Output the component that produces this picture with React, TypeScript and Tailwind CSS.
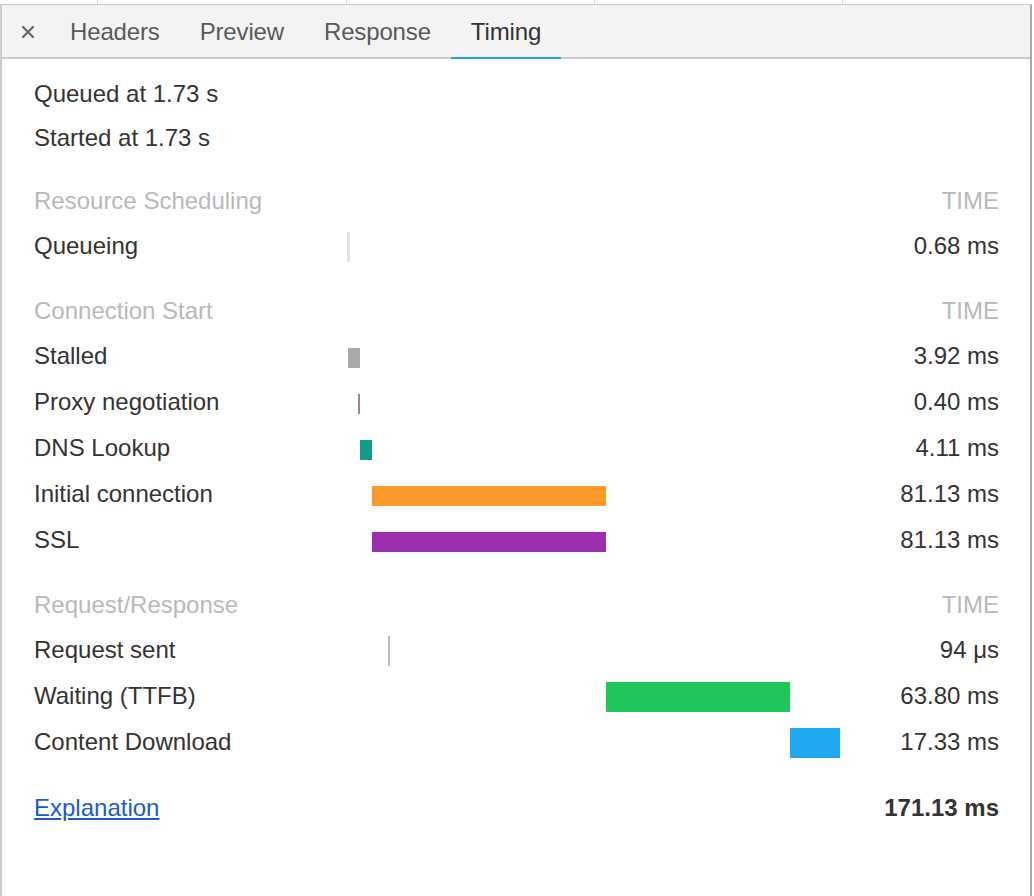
import React from 'react';

type Bar = { left: number; width: number; color: string; size: 'thin' | 'thick' };
type TimingRow = { label: string; time: string; bars: Bar[] };
type Section = { title: string; rows: TimingRow[] };

const sections: Section[] = [
  {
    title: 'Resource Scheduling',
    rows: [{ label: 'Queueing', time: '0.68 ms', bars: [{ left: 0, width: 3, color: 'bg-[#e2e2e2]', size: 'thick' }] }],
  },
  {
    title: 'Connection Start',
    rows: [
      { label: 'Stalled', time: '3.92 ms', bars: [{ left: 1, width: 12, color: 'bg-[#aaaaaa]', size: 'thin' }] },
      { label: 'Proxy negotiation', time: '0.40 ms', bars: [{ left: 11, width: 2, color: 'bg-[#a1887f]', size: 'thin' }] },
      { label: 'DNS Lookup', time: '4.11 ms', bars: [{ left: 13, width: 12, color: 'bg-[#159a8a]', size: 'thin' }] },
      { label: 'Initial connection', time: '81.13 ms', bars: [{ left: 25, width: 234, color: 'bg-[#fd982a]', size: 'thin' }] },
      { label: 'SSL', time: '81.13 ms', bars: [{ left: 25, width: 234, color: 'bg-[#9b2fae]', size: 'thin' }] },
    ],
  },
  {
    title: 'Request/Response',
    rows: [
      { label: 'Request sent', time: '94 μs', bars: [{ left: 41, width: 2, color: 'bg-[#b0bec5]', size: 'thick' }] },
      { label: 'Waiting (TTFB)', time: '63.80 ms', bars: [{ left: 259, width: 184, color: 'bg-[#1fc75b]', size: 'thick' }] },
      { label: 'Content Download', time: '17.33 ms', bars: [{ left: 443, width: 50, color: 'bg-[#1fa9f1]', size: 'thick' }] },
    ],
  },
];

const tabs = ['Headers', 'Preview', 'Response', 'Timing'];

const Row: React.FC<{ row: TimingRow }> = ({ row }) => (
  <div className="flex h-[46px] items-center pb-[2px] text-[#333]">
    <div className="w-[313px] shrink-0">{row.label}</div>
    <div className="relative h-full w-[494px] shrink-0">
      {row.bars.map((bar, i) => (
        <div
          key={i}
          className={`absolute ${bar.color} ${bar.size === 'thin' ? 'top-[14px] h-[20px]' : 'top-[8px] h-[30px]'}`}
          style={{ left: bar.left, width: bar.width }}
        />
      ))}
    </div>
    <div className="flex-1 text-right">{row.time}</div>
  </div>
);

export default function App() {
  return (
    <div className="relative h-[896px] w-[1034px] overflow-hidden bg-white font-['Liberation_Sans',Arial,sans-serif] text-[24px]">
      {/* strip of the request table above */}
      <div className="flex h-[5px] w-[1032px] border-b border-[#cccccc]">
        <div className="w-[98px] border-r border-[#d6d6d6]" />
        <div className="w-[249px] border-r border-[#d6d6d6]" />
        <div className="w-[248px] border-r border-[#d6d6d6]" />
        <div className="w-[248px] border-r border-[#d6d6d6]" />
        <div className="flex-1" />
      </div>

      <div className="flex h-[891px] w-[1032px] flex-col border-l-2 border-r-2 border-l-[#cccccc] border-r-[#a9a9a9]">
        {/* tab bar */}
        <div className="flex h-[54px] shrink-0 items-stretch border-b-2 border-[#cccccc] bg-[#f3f3f3] pb-[1px]">
          <div className="flex items-center pl-[20px] pr-[16px] pt-[2px]">
            <svg width="12" height="12" viewBox="0 0 12 12" className="text-[#666]">
              <path d="M1 1 L11 11 M11 1 L1 11" stroke="currentColor" strokeWidth="2.2" strokeLinecap="square" />
            </svg>
          </div>
          {tabs.map(tab => (
            <div
              key={tab}
              className={`relative flex items-center px-5 pt-[2px] tracking-[-0.15px] ${tab === 'Timing' ? 'text-[#333]' : 'text-[#5a5a5a]'}`}
            >
              {tab}
              {tab === 'Timing' && <div className="absolute bottom-[-3px] left-0 right-0 h-[2px] bg-[#1da1f0]" />}
            </div>
          ))}
        </div>

        {/* timing content */}
        <div className="flex flex-col pl-[32px] pr-[31px] pt-[13px]">
          <div className="flex h-[44px] items-center text-[#333]">Queued at 1.73 s</div>
          <div className="flex h-[44px] items-center text-[#333]">Started at 1.73 s</div>

          {sections.map(section => (
            <div key={section.title} className="mt-[18px] flex flex-col">
              <div className="flex h-[46px] items-center justify-between text-[#b9b9b9]">
                <span>{section.title}</span>
                <span>TIME</span>
              </div>
              {section.rows.map(row => (
                <Row key={row.label} row={row} />
              ))}
            </div>
          ))}

          <div className="mt-[19px] flex h-[46px] items-center justify-between">
            <a href="#" className="text-[#1a5bd0] underline">
              Explanation
            </a>
            <span className="font-bold text-[#333]">171.13 ms</span>
          </div>
        </div>
      </div>
    </div>
  );
}
